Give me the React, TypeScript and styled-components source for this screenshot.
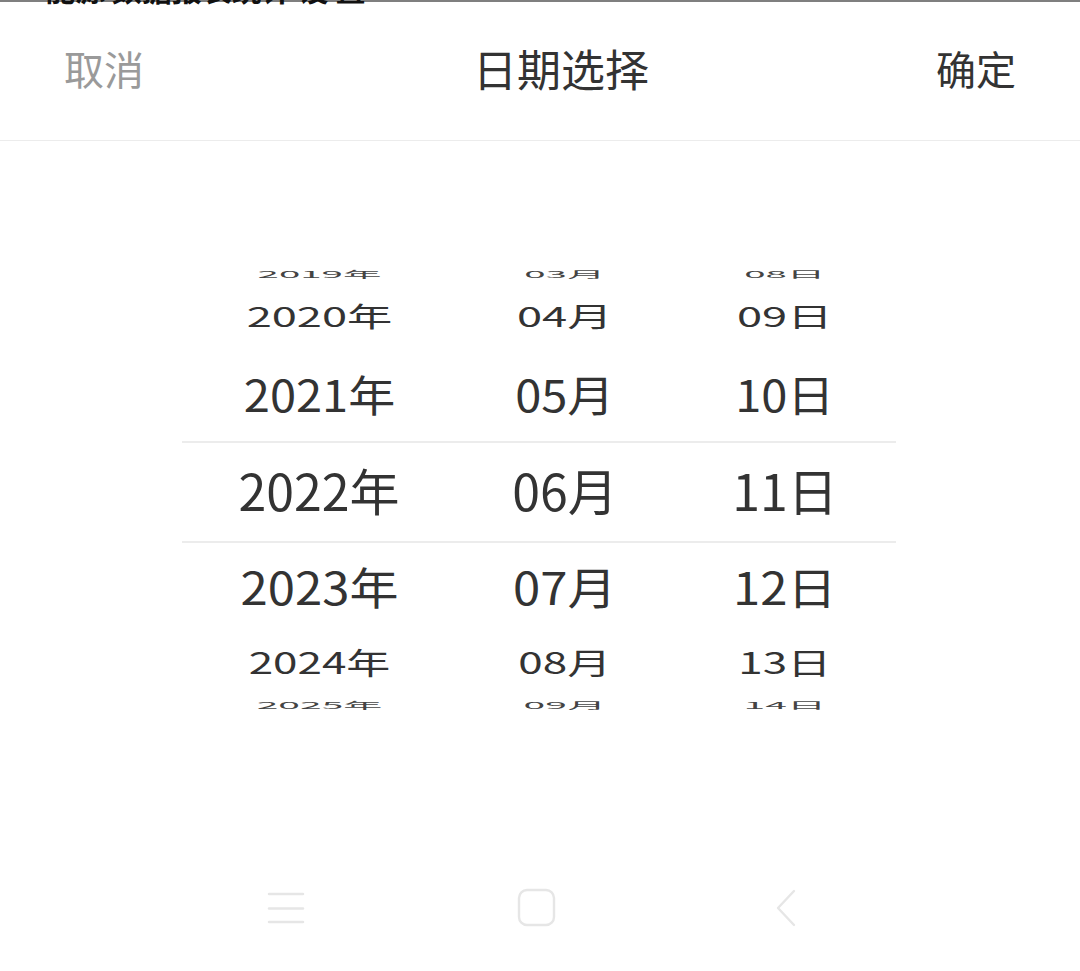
import React from "react";
import styled, { createGlobalStyle } from "styled-components";

const Global = createGlobalStyle`
  html, body { margin: 0; padding: 0; background: #ffffff; }
  body { font-family: "Noto Sans CJK SC", "Noto Sans", sans-serif; }
  * { box-sizing: border-box; }
`;

const Page = styled.div`
  width: 1080px;
  height: 971px;
  display: flex;
  flex-direction: column;
  background: #ffffff;
  overflow: hidden;
`;

const Peek = styled.div`
  height: 5px;
  overflow: hidden;
  background: linear-gradient(#7f7f7f 0 2px, #ffffff 2px);
  padding-left: 45px;
`;

const PeekText = styled.div`
  margin-top: -27px;
  font-size: 30px;
  line-height: 30px;
  font-weight: 700;
  color: #111;
  white-space: nowrap;
`;

const Header = styled.div`
  height: 141px;
  display: grid;
  grid-template-columns: 409px 463px auto;
  align-items: center;
  padding-left: 64px;
  border-bottom: 1px solid #ececec;
  margin-top: -5px;
`;

const Action = styled.div<{ $muted?: boolean }>`
  font-size: 40px;
  line-height: 1;
  color: ${(p) => (p.$muted ? "#9a9a9a" : "#333333")};
  padding-bottom: 4px;
`;

const Title = styled.div`
  font-size: 44px;
  line-height: 1;
  color: #333333;
  padding-bottom: 4px;
`;

const Picker = styled.div`
  margin-top: 127px;
  margin-left: 182px;
  width: 714px;
  display: grid;
  grid-template-columns: 274px 218px 222px;
`;

const Column = styled.div`
  display: flex;
  flex-direction: column;
`;

const Cell = styled.div<{ $h: number; $selected?: boolean }>`
  height: ${(p) => p.$h}px;
  display: flex;
  align-items: center;
  justify-content: center;
  border-top: ${(p) => (p.$selected ? "2px solid #ececec" : "none")};
  border-bottom: ${(p) => (p.$selected ? "2px solid #ececec" : "none")};
  overflow: visible;
`;

const Label = styled.span<{ $far?: boolean }>`
  display: inline-block;
  font-size: 50px;
  line-height: 1;
  color: ${(p) => (p.$far ? "#444444" : "#333333")};
  white-space: nowrap;
  transform-origin: center center;
`;

const NavBar = styled.div`
  margin-top: auto;
  height: 124px;
  display: flex;
  align-items: center;
  padding-bottom: 2px;
`;

const NavSlot = styled.div<{ $w: number }>`
  width: ${(p) => p.$w}px;
  display: flex;
  justify-content: flex-start;
`;

type Row = { h: number; sx: number; sy: number; far?: boolean };

const rows: Row[] = [
  { h: 17, sx: 0.77, sy: 0.19, far: true },
  { h: 66, sx: 0.905, sy: 0.54 },
  { h: 90, sx: 0.94, sy: 0.865 },
  { h: 102, sx: 1, sy: 1 },
  { h: 90, sx: 0.98, sy: 0.89 },
  { h: 62, sx: 0.88, sy: 0.6 },
  { h: 25, sx: 0.78, sy: 0.19, far: true },
];

const years = ["2019年", "2020年", "2021年", "2022年", "2023年", "2024年", "2025年"];
const months = ["03月", "04月", "05月", "06月", "07月", "08月", "09月"];
const days = ["08日", "09日", "10日", "11日", "12日", "13日", "14日"];

function Wheel({ items }: { items: string[] }) {
  return (
    <Column>
      {items.map((t, i) => {
        const r = rows[i];
        return (
          <Cell key={t} $h={r.h} $selected={i === 3}>
            <Label
              $far={r.far}
              style={{ transform: `translateY(-3px) scale(${r.sx}, ${r.sy})` }}
            >
              {t}
            </Label>
          </Cell>
        );
      })}
    </Column>
  );
}

const MenuIcon = () => (
  <svg width="40" height="36" viewBox="0 0 40 36">
    <g stroke="#e6e6e6" strokeWidth="2.4" strokeLinecap="round">
      <line x1="3" y1="4" x2="37" y2="4" />
      <line x1="3" y1="18.5" x2="37" y2="18.5" />
      <line x1="3" y1="32" x2="37" y2="32" />
    </g>
  </svg>
);

const HomeIcon = () => (
  <svg width="40" height="40" viewBox="0 0 40 40">
    <rect x="2" y="2" width="35" height="35" rx="8" fill="none" stroke="#e6e6e6" strokeWidth="2.4" />
  </svg>
);

const BackIcon = () => (
  <svg width="24" height="38" viewBox="0 0 24 38">
    <polyline points="20,2 4,19 20,36" fill="none" stroke="#e6e6e6" strokeWidth="2.4" strokeLinecap="round" strokeLinejoin="round" />
  </svg>
);

export default function App() {
  return (
    <Page>
      <Global />
      <Peek>
        <PeekText>能源 数据报表统计 设 置</PeekText>
      </Peek>
      <Header>
        <Action $muted>取消</Action>
        <Title>日期选择</Title>
        <Action>确定</Action>
      </Header>
      <Picker>
        <Wheel items={years} />
        <Wheel items={months} />
        <Wheel items={days} />
      </Picker>
      <NavBar>
        <NavSlot $w={266} />
        <NavSlot $w={251}>
          <MenuIcon />
        </NavSlot>
        <NavSlot $w={257}>
          <HomeIcon />
        </NavSlot>
        <NavSlot $w={40}>
          <BackIcon />
        </NavSlot>
      </NavBar>
    </Page>
  );
}
